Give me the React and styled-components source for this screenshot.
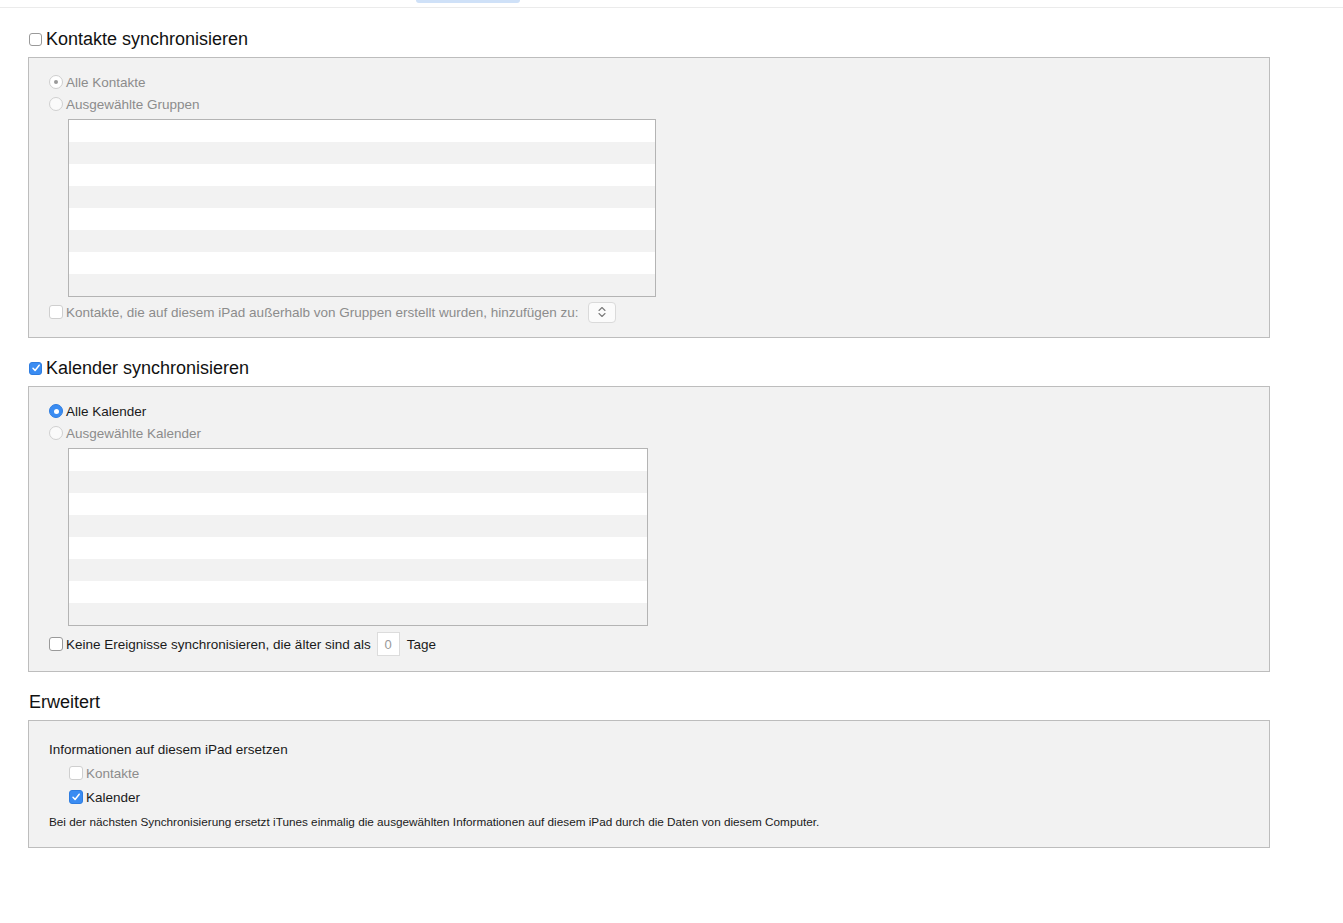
import React from "react";
import styled, { createGlobalStyle, css } from "styled-components";

const GlobalStyle = createGlobalStyle`
  body {
    margin: 0;
    background: #fff;
    font-family: "Liberation Sans", Arial, sans-serif;
    color: #1a1a1a;
  }
`;

const Page = styled.div`
  width: 1343px;
  min-height: 923px;
  background: #fff;
`;

const TopBar = styled.div`
  height: 7px;
  border-bottom: 1px solid #ebebeb;
  padding-left: 416px;
`;

const TabHint = styled.div`
  width: 104px;
  height: 3px;
  background: #cfe1f8;
  border-radius: 0 0 4px 4px;
`;

const Content = styled.div`
  padding: 19px 0 0 28px;
  width: 1242px;
`;

const SectionHead = styled.div`
  display: flex;
  align-items: center;
  height: 24px;
  margin-top: ${(p) => p.$top || 0}px;
  margin-bottom: 6px;
  padding-left: 1px;
  font-size: 18px;
  color: #111;
  gap: 4px;
`;

const Panel = styled.div`
  background: #f2f2f2;
  border: 1px solid #bdbdbd;
  padding: ${(p) => p.$pt || 13}px 20px ${(p) => p.$pb || 14}px 20px;
`;

const Row = styled.div`
  display: flex;
  align-items: center;
  height: ${(p) => p.$h || 22}px;
  margin-top: ${(p) => p.$mt || 0}px;
  padding-left: ${(p) => p.$indent || 0}px;
  font-size: 13.5px;
  color: ${(p) => (p.$dim ? "#8c8c8c" : "#1a1a1a")};
  gap: 3px;
  white-space: nowrap;
`;

const Box = styled.span`
  display: inline-flex;
  align-items: center;
  justify-content: center;
  box-sizing: border-box;
  width: ${(p) => p.$s || 14}px;
  height: ${(p) => p.$s || 14}px;
  border-radius: 3px;
  flex-shrink: 0;
  ${(p) =>
    p.$on
      ? css`
          background: #3a8cf2;
          border: 1px solid #2f7de0;
        `
      : css`
          background: #fff;
          border: 1px solid ${p.$dim ? "#cfcfcf" : "#9a9a9a"};
        `}
`;

const Radio = styled.span`
  display: inline-flex;
  align-items: center;
  justify-content: center;
  box-sizing: border-box;
  width: 14px;
  height: 14px;
  border-radius: 50%;
  flex-shrink: 0;
  ${(p) =>
    p.$on
      ? css`
          background: ${p.$dim ? "#fff" : "#3a8cf2"};
          border: 1px solid ${p.$dim ? "#cfcfcf" : "#2f7de0"};
        `
      : css`
          background: #fafafa;
          border: 1px solid #d0d0d0;
        `}
  &::after {
    content: "";
    display: ${(p) => (p.$on ? "block" : "none")};
    width: ${(p) => (p.$dim ? 4 : 5)}px;
    height: ${(p) => (p.$dim ? 4 : 5)}px;
    border-radius: 50%;
    background: ${(p) => (p.$dim ? "#9a9a9a" : "#fff")};
  }
`;

const List = styled.div`
  box-sizing: border-box;
  width: ${(p) => p.$w}px;
  height: 178px;
  margin: 4px 0 0 19px;
  border: 1px solid #b4b4b4;
  background: repeating-linear-gradient(
    to bottom,
    #fff 0,
    #fff 22px,
    #f2f2f2 22px,
    #f2f2f2 44px
  );
`;

const Stepper = styled.span`
  display: inline-flex;
  align-items: center;
  justify-content: center;
  box-sizing: border-box;
  width: 28px;
  height: 21px;
  margin-left: 6px;
  border: 1px solid #dadada;
  border-radius: 4px;
  background: #fbfbfb;
`;

const NumField = styled.span`
  display: inline-flex;
  align-items: center;
  justify-content: center;
  box-sizing: border-box;
  width: 23px;
  height: 24px;
  margin: 0 4px 0 3px;
  background: #fff;
  border: 1px solid #dcdcdc;
  color: #999;
  font-size: 13px;
`;

const Note = styled.span`
  font-size: 11.75px;
  color: #1a1a1a;
`;

function Check({ on, dim, s }) {
  return (
    <Box $on={on} $dim={dim} $s={s}>
      {on && (
        <svg width="10" height="10" viewBox="0 0 10 10">
          <path
            d="M2 5.2 L4.1 7.5 L8.2 2.2"
            fill="none"
            stroke="#fff"
            strokeWidth="1.5"
            strokeLinecap="round"
            strokeLinejoin="round"
          />
        </svg>
      )}
    </Box>
  );
}

function Arrows() {
  return (
    <svg width="8" height="12" viewBox="0 0 8 12">
      <path
        d="M1 4.5 L4 1.5 L7 4.5 M1 7.5 L4 10.5 L7 7.5"
        fill="none"
        stroke="#7a7a7a"
        strokeWidth="1.1"
        strokeLinecap="round"
        strokeLinejoin="round"
      />
    </svg>
  );
}

export default function App() {
  return (
    <Page>
      <GlobalStyle />
      <TopBar>
        <TabHint />
      </TopBar>

      <Content>
        <SectionHead>
          <Check s={13} />
          Kontakte synchronisieren
        </SectionHead>
        <Panel $pb={14}>
          <Row $dim>
            <Radio $on $dim />
            Alle Kontakte
          </Row>
          <Row $dim>
            <Radio />
            Ausgewählte Gruppen
          </Row>
          <List $w={588} />
          <Row $dim $mt={4}>
            <Check dim />
            Kontakte, die auf diesem iPad außerhalb von Gruppen erstellt wurden,
            hinzufügen zu:
            <Stepper>
              <Arrows />
            </Stepper>
          </Row>
        </Panel>

        <SectionHead $top={18}>
          <Check on s={13} />
          Kalender synchronisieren
        </SectionHead>
        <Panel $pb={15}>
          <Row>
            <Radio $on />
            Alle Kalender
          </Row>
          <Row $dim>
            <Radio />
            Ausgewählte Kalender
          </Row>
          <List $w={580} />
          <Row $h={24} $mt={6}>
            <Check />
            Keine Ereignisse synchronisieren, die älter sind als
            <NumField>0</NumField>
            Tage
          </Row>
        </Panel>

        <SectionHead $top={18}>Erweitert</SectionHead>
        <Panel $pt={16} $pb={14}>
          <Row $h={24}>Informationen auf diesem iPad ersetzen</Row>
          <Row $h={24} $indent={20} $dim>
            <Check dim />
            Kontakte
          </Row>
          <Row $h={24} $indent={20}>
            <Check on />
            Kalender
          </Row>
          <Row $h={24}>
            <Note>
              Bei der nächsten Synchronisierung ersetzt iTunes einmalig die
              ausgewählten Informationen auf diesem iPad durch die Daten von
              diesem Computer.
            </Note>
          </Row>
        </Panel>
      </Content>
    </Page>
  );
}
